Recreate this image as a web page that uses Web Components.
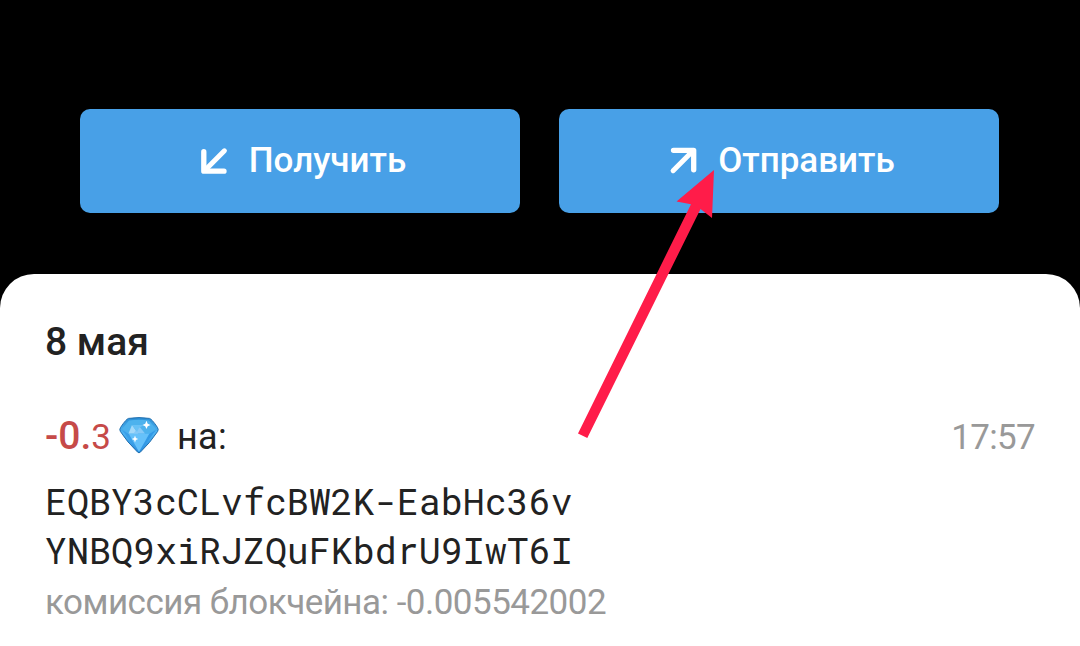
<!DOCTYPE html>
<html lang="ru">
<head>
<meta charset="utf-8">
<title>Кошелёк</title>
<style>
html, body { margin: 0; height: 100%; overflow: hidden; background: #000; }
body { font-family: Roboto, "Liberation Sans", sans-serif; color: #222; }
</style>
</head>
<body>
<wallet-screen></wallet-screen>
<script>
const define = (name, html) => customElements.define(name, class extends HTMLElement {
  constructor() {
    super();
    this.attachShadow({ mode: 'open' }).innerHTML = html;
  }
});

define('arrow-icon', `
<style>
:host { display: block; width: 28px; height: 28px; }
:host([out]) { transform: translate(.5px, -.5px) rotate(180deg); margin-top: -1px; }
svg { display: block; }
</style>
<svg width="28" height="28" viewBox="0 0 28 28" fill="none" stroke="#fff" stroke-width="5.3" stroke-linecap="round" stroke-linejoin="round"><path d="M3.8 4.7V24.2H24"/><path d="M24.4 3.8L5 23.2" stroke-width="5"/></svg>`);

define('wallet-button', `
<style>
:host { flex: 1; height: 104px; box-sizing: border-box; display: flex; align-items: center; justify-content: center;
  gap: 21px; padding-left: 6px; border-radius: 10px; background: #48a0e7; color: #fff; font-size: 35px; font-weight: 500; line-height: 40px; }
span { display: block; white-space: nowrap; }
</style>
<slot name="icon"></slot><span><slot></slot></span>`);

define('gem-icon', `
<style>:host { display: block; width: 40px; height: 38px; } svg { display: block; }</style>
<svg width="40" height="38" viewBox="0 0 40 38">
<defs><linearGradient id="g" x1="0" y1="0" x2="0" y2="1"><stop offset="0" stop-color="#2b8fd6"/><stop offset=".45" stop-color="#4fb4f2"/><stop offset="1" stop-color="#2187dc"/></linearGradient></defs>
<path d="M9.5 1.4Q20-.2 30.5 1.4Q33 2.2 38.5 10.5Q39.8 12.5 38.6 14.5Q31 26 21.3 35.2Q20 36.4 18.7 35.2Q8 25 1.4 14.5Q.2 12.5 1.5 10.5Q7 2.2 9.5 1.4Z" fill="url(#g)" stroke="#216fae" stroke-width="1"/>
<path d="M3 12L10 3.5Q20 2 30 3.5L37 12L31 16H9Z" fill="#4db2ed"/>
<path d="M3 13L10 17L19 34Z" fill="#3b9fe8"/>
<path d="M37 13L30 17L21 34Z" fill="#3299e6"/>
<path d="M10 17H30L20 35Z" fill="#65c1fa"/>
<path d="M13 8L19 16.5H9.5Z" fill="#a4d9f9"/>
<path d="M20 9L26 16.5H14.5Z" fill="#86c9f7"/>
<path d="M13 8H25L20 11L18 15Z" fill="#69c1f5"/>
<path d="M27.5 3.8L28.7 6.7L31.5 8L28.7 9.2L27.5 12L26.2 9.2L23.5 8L26.2 6.7Z" fill="#fff"/>
<path d="M16 18.5L16.9 21.1L19.2 22L16.9 22.9L16 25.5L15.1 22.9L12.8 22L15.1 21.1Z" fill="#fff"/>
</svg>`);

define('wallet-transaction', `
<style>
:host { display: block; }
.top { display: flex; align-items: baseline; height: 46px; line-height: 46px; font-size: 35px; }
.amount { color: #c64a48; display: flex; align-items: baseline; }
.whole { font-size: 39px; font-weight: 500; }
gem-icon { align-self: center; margin: 0 0 0 8px; }
.to { margin-left: 18px; font-size: 36px; letter-spacing: .3px; }
.time { margin-left: auto; color: #999; font-size: 35px; letter-spacing: -.7px; }
.address { margin-top: 18px; font: 36.65px/49px "Roboto Mono", "DejaVu Sans Mono", monospace; white-space: nowrap; }
.fee { margin-top: 7px; color: #999; font-size: 35px; letter-spacing: -.52px; line-height: 42px; white-space: nowrap; }
</style>
<div class="top"><span class="amount"><span class="whole">-0.</span><span>3</span></span><gem-icon></gem-icon><span class="to">на:</span><span class="time"><slot name="time"></slot></span></div>
<div class="address"><slot name="address"></slot></div>
<div class="fee"><slot name="fee"></slot></div>`);

define('history-sheet', `
<style>
:host { flex: 1; display: block; box-sizing: border-box; background: #fff; border-radius: 34px 34px 0 0; padding: 44px 45px 0 45px; }
h2 { margin: 0 0 47px; font-size: 39px; line-height: 48px; font-weight: 500; }
</style>
<h2><slot name="date"></slot></h2><slot></slot>`);

define('pointer-arrow', `
<style>:host { position: absolute; left: 570px; top: 160px; width: 160px; height: 290px; } svg { display: block; }</style>
<svg width="160" height="290" viewBox="570 160 160 290"><path d="M714 170L712 218L700.5 209L587.3 438L578 433.5L691 204.2L676.5 201.5Z" fill="#ff1c49"/></svg>`);

define('wallet-screen', `
<style>
:host { position: relative; display: flex; flex-direction: column; width: 1080px; height: 646px; overflow: hidden; }
nav { display: flex; gap: 39px; padding: 109px 81px 61px 80px; }
</style>
<nav>
<wallet-button><arrow-icon slot="icon"></arrow-icon>Получить</wallet-button>
<wallet-button><arrow-icon slot="icon" out></arrow-icon>Отправить</wallet-button>
</nav>
<history-sheet><span slot="date">8 мая</span>
<wallet-transaction><span slot="time">17:57</span><span slot="address">EQBY3cCLvfcBW2K-EabHc36v<br>YNBQ9xiRJZQuFKbdrU9IwT6I</span><span slot="fee">комиссия блокчейна: -0.005542002</span></wallet-transaction>
</history-sheet>
<pointer-arrow></pointer-arrow>`);
</script>
</body>
</html>
